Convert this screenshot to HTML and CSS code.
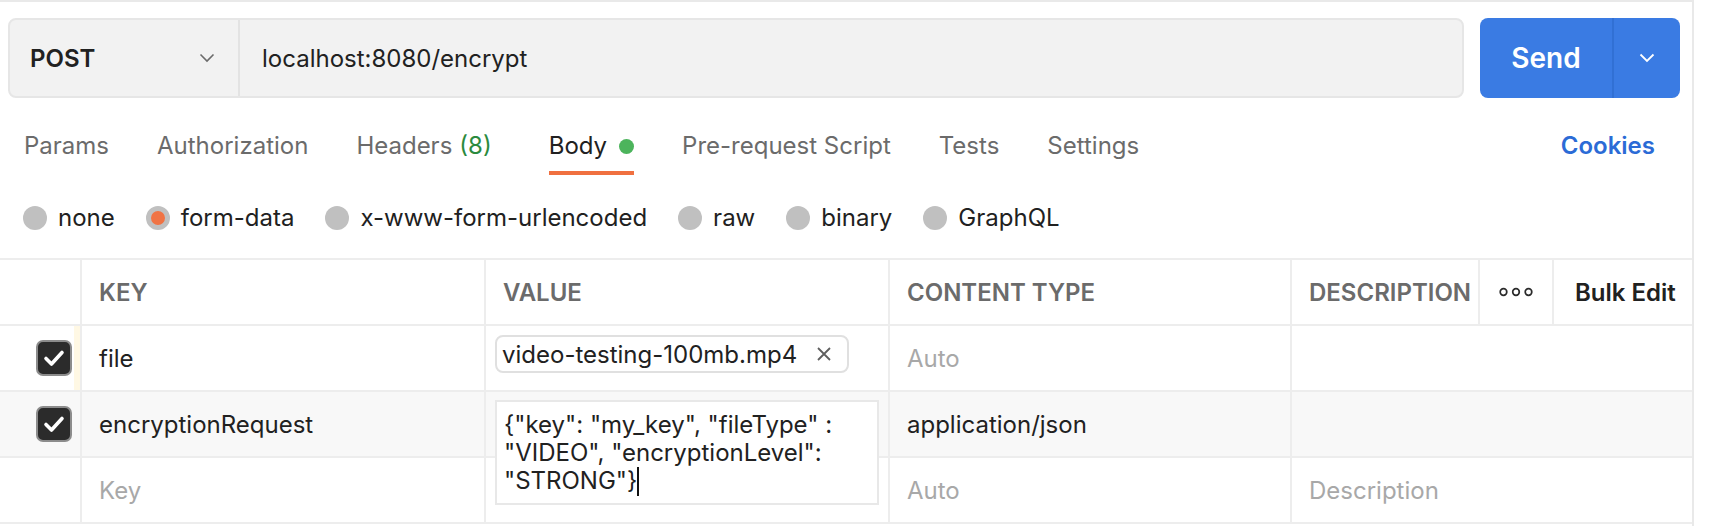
FILE: index.html
```html
<!DOCTYPE html>
<html lang="en">
<head>
<meta charset="utf-8">
<title>Postman request</title>
<link rel="stylesheet" href="styles.css">
</head>
<body>
<div class="panel">
  <div class="request">
    <div class="url-bar">
      <div class="method">
        <span class="method-name">POST</span>
        <svg class="chev" width="16" height="10" viewBox="0 0 16 10"><path d="M1.5 1.5 L8 8 L14.5 1.5" fill="none" stroke="#6b6b6b" stroke-width="1.6"/></svg>
      </div>
      <div class="url">localhost:8080/encrypt</div>
    </div>
    <div class="send">
      <span class="send-label">Send</span>
      <span class="send-menu"><svg width="16" height="10" viewBox="0 0 16 10"><path d="M1.5 1.5 L8 8 L14.5 1.5" fill="none" stroke="#ffffff" stroke-width="1.8"/></svg></span>
    </div>
  </div>

  <div class="tabs">
    <span class="tab">Params</span>
    <span class="tab">Authorization</span>
    <span class="tab">Headers <span class="count">(8)</span></span>
    <span class="tab active">Body<span class="dot"></span></span>
    <span class="tab">Pre-request Script</span>
    <span class="tab">Tests</span>
    <span class="tab">Settings</span>
    <span class="cookies">Cookies</span>
  </div>

  <div class="radios">
    <span class="radio"><span class="circle"></span>none</span>
    <span class="radio"><span class="circle selected"></span>form-data</span>
    <span class="radio"><span class="circle"></span>x-www-form-urlencoded</span>
    <span class="radio"><span class="circle"></span>raw</span>
    <span class="radio"><span class="circle"></span>binary</span>
    <span class="radio"><span class="circle"></span>GraphQL</span>
  </div>

  <div class="table">
    <div class="row head">
      <div class="cell"></div>
      <div class="cell">KEY</div>
      <div class="cell">VALUE</div>
      <div class="cell">CONTENT TYPE</div>
      <div class="cell">DESCRIPTION</div>
      <div class="cell center">
        <svg width="34" height="10" viewBox="0 0 34 10"><circle cx="4.5" cy="5" r="3.3" fill="none" stroke="#2b2b2b" stroke-width="1.7"/><circle cx="17" cy="5" r="3.3" fill="none" stroke="#2b2b2b" stroke-width="1.7"/><circle cx="29.5" cy="5" r="3.3" fill="none" stroke="#2b2b2b" stroke-width="1.7"/></svg>
      </div>
      <div class="cell bulk">Bulk Edit</div>
    </div>

    <div class="row">
      <div class="cell check-cell handle">
        <span class="checkbox"><svg width="22" height="18" viewBox="0 0 22 18"><path d="M3 9.5 L8.5 15 L19 3.5" fill="none" stroke="#fff" stroke-width="3.6" stroke-linecap="round" stroke-linejoin="round"/></svg></span>
      </div>
      <div class="cell">file</div>
      <div class="cell top">
        <span class="chip">video-testing-100mb.mp4<svg class="close" width="14" height="14" viewBox="0 0 14 14"><path d="M1 1 L13 13 M13 1 L1 13" stroke="#5f5f5f" stroke-width="1.8"/></svg></span>
      </div>
      <div class="cell muted">Auto</div>
      <div class="cell desc"></div>
    </div>

    <div class="row hover">
      <div class="cell check-cell">
        <span class="checkbox"><svg width="22" height="18" viewBox="0 0 22 18"><path d="M3 9.5 L8.5 15 L19 3.5" fill="none" stroke="#fff" stroke-width="3.6" stroke-linecap="round" stroke-linejoin="round"/></svg></span>
      </div>
      <div class="cell">encryptionRequest</div>
      <div class="cell editing">
        <div class="editor">{"key": "my_key", "fileType" : "VIDEO", "encryptionLevel": "STRONG"}<span class="caret"></span></div>
      </div>
      <div class="cell">application/json</div>
      <div class="cell desc"></div>
    </div>

    <div class="row">
      <div class="cell check-cell"></div>
      <div class="cell muted">Key</div>
      <div class="cell"></div>
      <div class="cell muted">Auto</div>
      <div class="cell desc muted">Description</div>
    </div>
  </div>
</div>
</body>
</html>
```

FILE: styles.css
```css
* { box-sizing: border-box; }

html, body {
  margin: 0;
  padding: 0;
  background: #ffffff;
}

body {
  font-family: Inter, "Noto Sans", "Liberation Sans", sans-serif;
  font-size: 24px;
  color: #212121;
}

.panel {
  width: 1694px;
  min-height: 526px;
  border-top: 2px solid #e9e9e9;
  border-right: 2px solid #e9e9e9;
}

/* request bar */
.request {
  display: flex;
  gap: 16px;
  padding: 16px 12px 0 8px;
}

.url-bar {
  flex: 1;
  display: flex;
  height: 80px;
  background: #f2f2f2;
  border: 2px solid #e6e6e6;
  border-radius: 8px;
}

.method {
  width: 230px;
  display: flex;
  align-items: center;
  justify-content: space-between;
  padding: 0 23px 0 20px;
  border-right: 2px solid #e3e3e3;
}

.method-name {
  font-weight: 600;
  font-size: 24px;
  color: #212121;
}

.url {
  display: flex;
  align-items: center;
  padding-left: 22px;
  font-size: 24px;
  color: #212121;
}

.send {
  width: 200px;
  height: 80px;
  display: flex;
  background: #3a7be3;
  border-radius: 8px;
  color: #ffffff;
}

.send-label {
  width: 134px;
  display: flex;
  align-items: center;
  justify-content: center;
  font-size: 28px;
  font-weight: 600;
  border-right: 2px solid #3170d4;
}

.send-menu {
  flex: 1;
  display: flex;
  align-items: center;
  justify-content: center;
}

/* tabs */
.tabs {
  display: flex;
  align-items: flex-start;
  gap: 48px;
  margin-top: 32px;
  padding: 0 37px 0 24px;
}

.tab {
  display: flex;
  align-items: center;
  line-height: 32px;
  padding-bottom: 9px;
  border-bottom: 4px solid transparent;
  color: #6b6b6b;
  white-space: nowrap;
}

.tab .count {
  color: #2b8a3e;
  margin-left: 7px;
}

.tab.active {
  color: #212121;
  border-bottom-color: #f07040;
  margin-left: 9px;
}

.dot {
  width: 15px;
  height: 15px;
  border-radius: 50%;
  background: #4cb45c;
  margin-left: 12px;
}

.cookies {
  margin-left: auto;
  line-height: 32px;
  font-weight: 600;
  color: #2b6bd6;
}

/* radios */
.radios {
  display: flex;
  gap: 31px;
  height: 32px;
  margin-top: 27px;
  padding-left: 23px;
}

.radio {
  display: flex;
  align-items: center;
  gap: 11px;
  color: #212121;
  line-height: 32px;
}

.circle {
  width: 24px;
  height: 24px;
  border-radius: 50%;
  background: #c0c0c0;
}

.circle.selected {
  border: 5px solid #c0c0c0;
  background: #f07344;
}

/* table */
.table {
  margin-top: 24px;
  border-top: 2px solid #ededed;
}

.row {
  display: grid;
  grid-template-columns: 82px 404px 404px 402px 188px 74px 138px;
  height: 66px;
}

.row.hover .cell {
  background: #f8f8f8;
}

.cell {
  display: flex;
  align-items: center;
  padding-left: 17px;
  border-right: 2px solid #ededed;
  border-bottom: 2px solid #ededed;
  white-space: nowrap;
}

.cell:last-child {
  border-right: none;
}

.head .cell {
  font-size: 24px;
  font-weight: 600;
  color: #6b6b6b;
}

.head .cell.center {
  justify-content: center;
  padding-left: 0;
}

.head .cell.bulk {
  color: #212121;
  padding-left: 21px;
}

.cell.desc {
  grid-column: span 3;
}

.cell.muted {
  color: #a8a8a8;
}

.check-cell {
  justify-content: flex-end;
  padding: 0 8px 0 0;
}

.check-cell.handle {
  box-shadow: inset -6px 0 0 #fff8e4;
}

.checkbox {
  width: 36px;
  height: 36px;
  border-radius: 7px;
  background: #2b2b2b;
  border: 2px solid #8c8c8c;
  display: flex;
  align-items: center;
  justify-content: center;
}

.cell.top {
  align-items: flex-start;
  padding: 9px 0 0 9px;
}

.chip {
  display: flex;
  align-items: center;
  height: 38px;
  padding: 0 16px 0 5px;
  border: 2px solid #e0e0e0;
  border-radius: 8px;
  background: #ffffff;
  color: #212121;
}

.close {
  margin-left: 20px;
}

.cell.editing {
  position: relative;
}

.editor {
  position: absolute;
  left: 9px;
  top: 8px;
  width: 384px;
  height: 105px;
  padding: 9px 8px 0 7px;
  background: #ffffff;
  border: 2px solid #e8e8e8;
  line-height: 28px;
  white-space: normal;
  color: #212121;
}

.caret {
  display: inline-block;
  width: 2px;
  height: 29px;
  background: #111111;
  vertical-align: -7px;
}
```
